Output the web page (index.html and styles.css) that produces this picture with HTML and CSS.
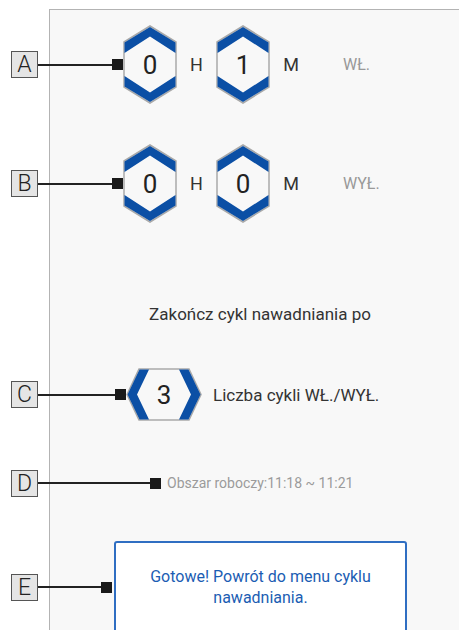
FILE: index.html
```html
<!DOCTYPE html>
<html lang="pl">
<head>
    <meta charset="UTF-8">
    <meta name="viewport" content="width=device-width, initial-scale=1.0">
    <title>Cykl nawadniania</title>
    <link rel="stylesheet" href="styles.css">
</head>
<body>
    <div class="panel">
        <!-- A: czas wlaczenia -->
        <div class="row row-a">
            <div class="callout callout-a"><span class="tag">A</span><span class="lead"></span><span class="dot"></span></div>
            <div class="hex">
                <svg viewBox="0 0 54 79" width="54" height="79">
                    <polygon points="1,17 27,1 53,17 53,62 27,78 1,62" fill="#f8f8f8" stroke="#a9a9a9" stroke-width="1.5"/>
                    <polygon points="1.5,17.5 27,2 52.5,17.5 52.5,28 27,11.5 1.5,28" fill="#0b4fa5"/>
                    <polygon points="1.5,61.5 27,77 52.5,61.5 52.5,51 27,67.5 1.5,51" fill="#0b4fa5"/>
                </svg>
                <span class="digit">0</span>
            </div>
            <span class="unit">H</span>
            <div class="hex">
                <svg viewBox="0 0 54 79" width="54" height="79">
                    <polygon points="1,17 27,1 53,17 53,62 27,78 1,62" fill="#f8f8f8" stroke="#a9a9a9" stroke-width="1.5"/>
                    <polygon points="1.5,17.5 27,2 52.5,17.5 52.5,28 27,11.5 1.5,28" fill="#0b4fa5"/>
                    <polygon points="1.5,61.5 27,77 52.5,61.5 52.5,51 27,67.5 1.5,51" fill="#0b4fa5"/>
                </svg>
                <span class="digit">1</span>
            </div>
            <span class="unit unit-m">M</span>
            <span class="state">WŁ.</span>
        </div>

        <!-- B: czas wylaczenia -->
        <div class="row row-b">
            <div class="callout callout-a"><span class="tag">B</span><span class="lead"></span><span class="dot"></span></div>
            <div class="hex">
                <svg viewBox="0 0 54 79" width="54" height="79">
                    <polygon points="1,17 27,1 53,17 53,62 27,78 1,62" fill="#f8f8f8" stroke="#a9a9a9" stroke-width="1.5"/>
                    <polygon points="1.5,17.5 27,2 52.5,17.5 52.5,28 27,11.5 1.5,28" fill="#0b4fa5"/>
                    <polygon points="1.5,61.5 27,77 52.5,61.5 52.5,51 27,67.5 1.5,51" fill="#0b4fa5"/>
                </svg>
                <span class="digit">0</span>
            </div>
            <span class="unit">H</span>
            <div class="hex">
                <svg viewBox="0 0 54 79" width="54" height="79">
                    <polygon points="1,17 27,1 53,17 53,62 27,78 1,62" fill="#f8f8f8" stroke="#a9a9a9" stroke-width="1.5"/>
                    <polygon points="1.5,17.5 27,2 52.5,17.5 52.5,28 27,11.5 1.5,28" fill="#0b4fa5"/>
                    <polygon points="1.5,61.5 27,77 52.5,61.5 52.5,51 27,67.5 1.5,51" fill="#0b4fa5"/>
                </svg>
                <span class="digit">0</span>
            </div>
            <span class="unit unit-m">M</span>
            <span class="state">WYŁ.</span>
        </div>

        <p class="title">Zakończ cykl nawadniania po</p>

        <!-- C: liczba cykli -->
        <div class="row row-c">
            <div class="callout callout-c"><span class="tag">C</span><span class="lead"></span><span class="dot"></span></div>
            <div class="hex hex-wide">
                <svg viewBox="0 0 76 53" width="76" height="53">
                    <polygon points="1,26.5 13,1 63,1 75,26.5 63,52 13,52" fill="#f8f8f8" stroke="#a9a9a9" stroke-width="1.5"/>
                    <polygon points="1.5,26.5 13.5,1.5 23,1.5 11,26.5 23,51.5 13.5,51.5" fill="#0b4fa5"/>
                    <polygon points="74.5,26.5 62.5,1.5 53,1.5 65,26.5 53,51.5 62.5,51.5" fill="#0b4fa5"/>
                </svg>
                <span class="digit">3</span>
            </div>
            <span class="cycles">Liczba cykli WŁ./WYŁ.</span>
        </div>

        <!-- D: obszar roboczy -->
        <div class="row row-d">
            <div class="callout callout-d"><span class="tag">D</span><span class="lead"></span><span class="dot"></span></div>
            <span class="range">Obszar roboczy:11:18 ~ 11:21</span>
        </div>

        <!-- E: gotowe -->
        <div class="row row-e">
            <div class="callout callout-e"><span class="tag">E</span><span class="lead"></span><span class="dot"></span></div>
            <button class="done">Gotowe! Powrót do menu cyklu nawadniania.</button>
        </div>
    </div>
</body>
</html>
```

FILE: styles.css
```css
body {
    margin: 0;
    height: 630px;
    overflow: hidden;
    background-color: #ffffff;
    font-family: Roboto, "Noto Sans", sans-serif;
    color: #333;
}
.panel {
    width: 420px;
    min-height: 660px;
    margin: 9px 0 0 49px;
    padding-top: 15px;
    border-top: 1px solid #b3b3b3;
    border-left: 1px solid #b3b3b3;
    background-color: #f8f8f8;
}
.row {
    display: flex;
    align-items: center;
}
.row-b {
    margin-top: 40px;
}
.row-c {
    margin-top: 42px;
}
.row-d {
    height: 20px;
    margin-top: 52px;
}
.row-e {
    margin-top: 48px;
}

/* callouts A-E */
.callout {
    display: flex;
    align-items: center;
    flex-shrink: 0;
    margin-left: -39px;
}
.callout-a { width: 112px; }
.callout-c { width: 115px; }
.callout-d { width: 150px; }
.callout-e { width: 101px; }
.tag {
    width: 25px;
    height: 25px;
    border: 1px solid #555;
    background-color: #e5e5e5;
    font-size: 23px;
    font-weight: 300;
    line-height: 25px;
    text-align: center;
    color: #222;
}
.lead {
    flex: 1;
    height: 2px;
    background-color: #222;
}
.dot {
    width: 11px;
    height: 11px;
    background-color: #1a1a1a;
}

/* hexagon fields */
.hex {
    position: relative;
    width: 54px;
    height: 79px;
    display: flex;
    align-items: center;
    justify-content: center;
    flex-shrink: 0;
}
.hex svg {
    position: absolute;
    top: 0;
    left: 0;
}
.hex-wide {
    width: 76px;
    height: 53px;
}
.digit {
    position: relative;
    font-size: 26px;
    color: #222;
}
.unit {
    width: 39px;
    text-align: center;
    font-size: 18px;
    color: #333;
}
.unit-m {
    width: 42px;
}
.state {
    margin-left: 31px;
    font-size: 16px;
    color: #999;
}
.title {
    margin: 79px 0 0;
    line-height: 24px;
    font-size: 17px;
    text-align: center;
}
.cycles {
    margin-left: 11px;
    font-size: 17px;
}
.range {
    margin-left: 6px;
    font-size: 14px;
    color: #9b9b9b;
}
.done {
    width: 293px;
    height: 92px;
    margin-left: 2px;
    padding: 0 30px;
    border: 2px solid #2f6ec2;
    border-radius: 3px;
    background-color: #ffffff;
    font-family: inherit;
    font-size: 16px;
    line-height: 21px;
    color: #1b5db3;
}
```
